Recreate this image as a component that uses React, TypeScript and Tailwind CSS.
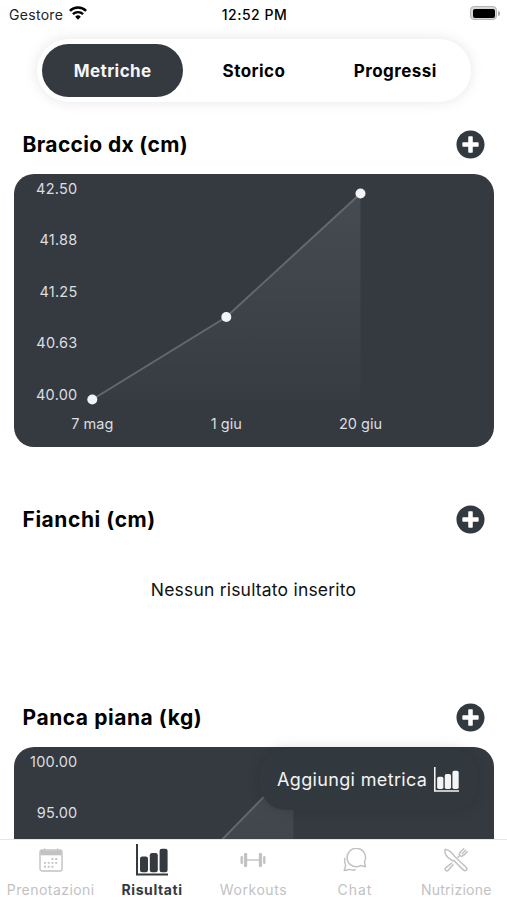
import type { ReactNode } from 'react';
import clsx from 'clsx';
import { FaPlusCircle } from 'react-icons/fa';

type Point = { x: number; y: number; label?: string };

type Metric = {
  id: string;
  title: string;
  ticks: string[];
  points: Point[];
};

const metrics: Record<string, Metric> = {
  braccio: {
    id: 'braccio',
    title: 'Braccio dx (cm)',
    ticks: ['42.50', '41.88', '41.25', '40.63', '40.00'],
    points: [
      { x: 78.3, y: 225.5, label: '7 mag' },
      { x: 212.3, y: 143, label: '1 giu' },
      { x: 346.5, y: 19.5, label: '20 giu' },
    ],
  },
  panca: {
    id: 'panca',
    title: 'Panca piana (kg)',
    ticks: ['100.00', '95.00'],
    points: [
      { x: 78.3, y: 225.5 },
      { x: 279.5, y: 19.5 },
    ],
  },
};

const tabs = [
  { label: 'Metriche', active: true, spacing: 'tracking-[0.4px]' },
  { label: 'Storico', active: false, spacing: 'tracking-[0.45px]' },
  { label: 'Progressi', active: false, spacing: 'tracking-[0.45px]' },
];

function BarsIcon({ className }: { className?: string }) {
  return (
    <svg viewBox="0 0 32 32" className={className} fill="currentColor">
      <path d="M0 0h2v29.600h30v2H0z" />
      <rect x="4" y="12.500" width="8" height="15.700" rx="2.200" />
      <rect x="13.800" y="9" width="8" height="19.200" rx="2.200" />
      <rect x="23.600" y="4.800" width="8" height="23.400" rx="2.200" />
    </svg>
  );
}

function CalendarIcon() {
  return (
    <svg viewBox="0 0 24 24" className="h-6 w-6" fill="none" stroke="currentColor">
      <rect x="1" y="2" width="22" height="21" rx="2.200" strokeWidth="1.400" />
      <path d="M1.500 2.500h21v4.800h-21z" fill="currentColor" stroke="none" />
      <path d="M5.500 .5v3M18.500 .5v3" strokeWidth="1.300" />
      <path d="M12.500 11h7.500M5 14.900h15M5 18.800h11.200" strokeWidth="1.900" strokeDasharray="1.900 1.850" />
    </svg>
  );
}

function DumbbellIcon() {
  return (
    <svg viewBox="0 0 26 16" className="h-4 w-[26px]" fill="currentColor">
      <rect x="0.500" y="4" width="2.400" height="8" rx="1" />
      <rect x="3.900" y="1" width="3.300" height="14" rx="1.300" />
      <rect x="7" y="7.300" width="12" height="1.400" />
      <rect x="18.800" y="1" width="3.300" height="14" rx="1.300" />
      <rect x="23.100" y="4" width="2.400" height="8" rx="1" />
    </svg>
  );
}

function ChatIcon() {
  return (
    <svg viewBox="0 0 24 24" className="h-6 w-6" fill="none" stroke="currentColor" strokeWidth="1.500" strokeLinejoin="round" strokeLinecap="round">
      <path d="M21.400 13.900a9.200 9.200 0 1 0-3.700 3.700l4.800 1.200z" />
      <path d="M1.800 10.500c-.6 2.600-.3 4.800.9 7L1.200 22.600l5.300-1.200c1.800.8 3.800.9 5.700.3" />
    </svg>
  );
}

function UtensilsIcon() {
  return (
    <svg viewBox="0 0 24 24" className="h-6 w-6" fill="none" stroke="currentColor" strokeWidth="1.500" strokeLinejoin="round" strokeLinecap="round">
      <path d="M1.200 1.200c-.8 3 .2 6 2.600 8.200l4.500 3.300 1.400-.3 9.800 9.700c2 1.600 4.300-.6 2.800-2.600L10.500 8.200C8.500 5 5 2 1.200 1.200z" />
      <path d="M7.600 15.200l-5.900 4.600c-1.700 1.700.8 4.100 2.500 2.500l4.800-5.500" />
      <path d="M14.200 9.300l1.500-1.700c-.7-1.500-.2-2.800.8-3.800L19.700.8M15.900 7.700c1.500.8 3 .4 4.200-.8l3.100-3.200M18.200 5.700l3.300-3.400" />
    </svg>
  );
}

const navItems: { label: string; icon: ReactNode; active?: boolean; spacing: string }[] = [
  { label: 'Prenotazioni', icon: <CalendarIcon />, spacing: 'tracking-[0.45px]' },
  { label: 'Risultati', icon: <BarsIcon className="h-8 w-8" />, active: true, spacing: 'tracking-[0.6px]' },
  { label: 'Workouts', icon: <DumbbellIcon />, spacing: 'tracking-[0.55px]' },
  { label: 'Chat', icon: <ChatIcon />, spacing: 'tracking-[0.9px]' },
  { label: 'Nutrizione', icon: <UtensilsIcon />, spacing: 'tracking-[0.25px]' },
];

function StatusBar() {
  return (
    <div className="grid h-[28px] shrink-0 grid-cols-3 items-center pr-[7px] pl-[9px] text-[14px] text-black">
      <div className="flex items-center gap-[6px] text-[#222]">
        <span className="tracking-[0.3px]">Gestore</span>
        <svg viewBox="0 0 18 14" className="mb-[2px] h-[14px] w-[18px]" fill="none" stroke="#000" strokeWidth="2.400">
          <path d="M.9 4.900a11.500 11.500 0 0 1 16.200 0" />
          <path d="M3.900 8.200a7.200 7.200 0 0 1 10.200 0" />
          <path d="M9 13.700l-2.800-3a4 4 0 0 1 5.600 0z" fill="#000" stroke="none" />
        </svg>
      </div>
      <span className="text-center font-medium tracking-[0.5px]">12:52 PM</span>
      <div className="flex items-center justify-end">
        <div className="mb-[2px] h-[14px] w-[27px] rounded-[4px] border border-[#b5b5b5] bg-[#d8d8d8] p-[1.5px]">
          <div className="h-full w-full rounded-[2px] bg-black" />
        </div>
        <div className="mb-[2px] ml-px h-[5px] w-[2px] rounded-r-full bg-[#aaa]" />
      </div>
    </div>
  );
}

function MetricHeader({ title, spacing }: { title: string; spacing: string }) {
  return (
    <div className="flex h-[57px] shrink-0 items-center justify-between pr-[22px] pl-[22.5px]">
      <h2 className={clsx('pt-px text-[21px] font-bold text-black', spacing)}>{title}</h2>
      <FaPlusCircle size={29} color="#32393f" />
    </div>
  );
}

function MetricChart({ metric }: { metric: Metric }) {
  const line = metric.points.map((p) => `${p.x},${p.y}`).join(' ');
  const first = metric.points[0];
  const last = metric.points[metric.points.length - 1];

  return (
    <div className="mt-px mr-[13px] ml-[14px] h-[273px] shrink-0 overflow-hidden rounded-[20px] bg-[#343a40]">
      <svg width="480" height="273" viewBox="0 0 480 273">
        <defs>
          <linearGradient id={`fill-${metric.id}`} x1="0" y1="0" x2="0" y2="1">
            <stop offset="0" stopColor="#fff" stopOpacity="0.09" />
            <stop offset="1" stopColor="#fff" stopOpacity="0.01" />
          </linearGradient>
        </defs>
        <polygon points={`${line} ${last.x},${first.y}`} fill={`url(#fill-${metric.id})`} />
        <polyline points={line} fill="none" stroke="#62686e" strokeWidth="2" />
        {metric.points.map((p) => (
          <circle key={p.x} cx={p.x} cy={p.y} r="5" fill="#f1f3f6" />
        ))}
        <g fill="#dcdee1" fontSize="14.5">
          {metric.ticks.map((tick, i) => (
            <text key={tick} x="63.5" y={19.5 + i * 51.5} textAnchor="end" letterSpacing="0.25">{tick}</text>
          ))}
          {metric.points.map((p) =>
            p.label ? <text key={p.x} x={p.x} y="254.5" textAnchor="middle">{p.label}</text> : null,
          )}
        </g>
      </svg>
    </div>
  );
}

export default function App() {
  return (
    <div className="relative flex h-[900px] w-[507px] flex-col overflow-hidden bg-white font-['Inter',sans-serif]">
      <StatusBar />

      <main className="flex min-h-0 flex-1 flex-col overflow-hidden">
        <div className="mt-[11px] mr-[36px] mb-[14px] ml-[37px] grid h-[63px] shrink-0 grid-cols-3 rounded-full bg-white p-[5px] shadow-[0_0_14px_rgba(0,0,0,0.1)]">
          {tabs.map((tab) => (
            <button
              key={tab.label}
              className={clsx(
                'rounded-full pt-[2px] text-[17px] font-bold',
                tab.spacing,
                tab.active ? 'bg-[#343a40] text-[#f5f5f6]' : 'text-black',
              )}
            >
              {tab.label}
            </button>
          ))}
        </div>

        <MetricHeader title={metrics.braccio.title} spacing="tracking-[0.35px]" />
        <MetricChart metric={metrics.braccio} />

        <div className="mt-[44px] h-[198px] shrink-0">
          <MetricHeader title="Fianchi (cm)" spacing="tracking-[0.55px]" />
          <p className="mt-[29px] text-center text-[17.5px] leading-[26px] tracking-[0.2px] text-[#111]">Nessun risultato inserito</p>
        </div>

        <MetricHeader title={metrics.panca.title} spacing="tracking-[0.55px]" />
        <MetricChart metric={metrics.panca} />
      </main>

      <button className="absolute top-[749px] left-[260px] flex h-[61px] w-[218px] items-center rounded-[26px] bg-[#32393e] pl-[17px] text-[18px] text-[#f3f4f5] shadow-[0_0_14px_rgba(0,0,0,0.15)]">
        <span className="w-[157px] text-left tracking-[0.35px] whitespace-nowrap">Aggiungi metrica</span>
        <BarsIcon className="h-[25px] w-[25px]" />
      </button>

      <nav className="relative grid h-[61px] shrink-0 grid-cols-5 border-t border-[#e6e6e6] bg-white">
        {navItems.map((item) => (
          <div
            key={item.label}
            className={clsx('flex flex-col items-center', item.active ? 'font-bold text-[#343a40]' : 'text-[#c2c2c2]')}
          >
            <div className="mt-[4px] flex h-[32px] items-center">{item.icon}</div>
            <span className={clsx('mt-[4px] text-[14px] leading-[20px]', item.spacing)}>{item.label}</span>
          </div>
        ))}
      </nav>
    </div>
  );
}
